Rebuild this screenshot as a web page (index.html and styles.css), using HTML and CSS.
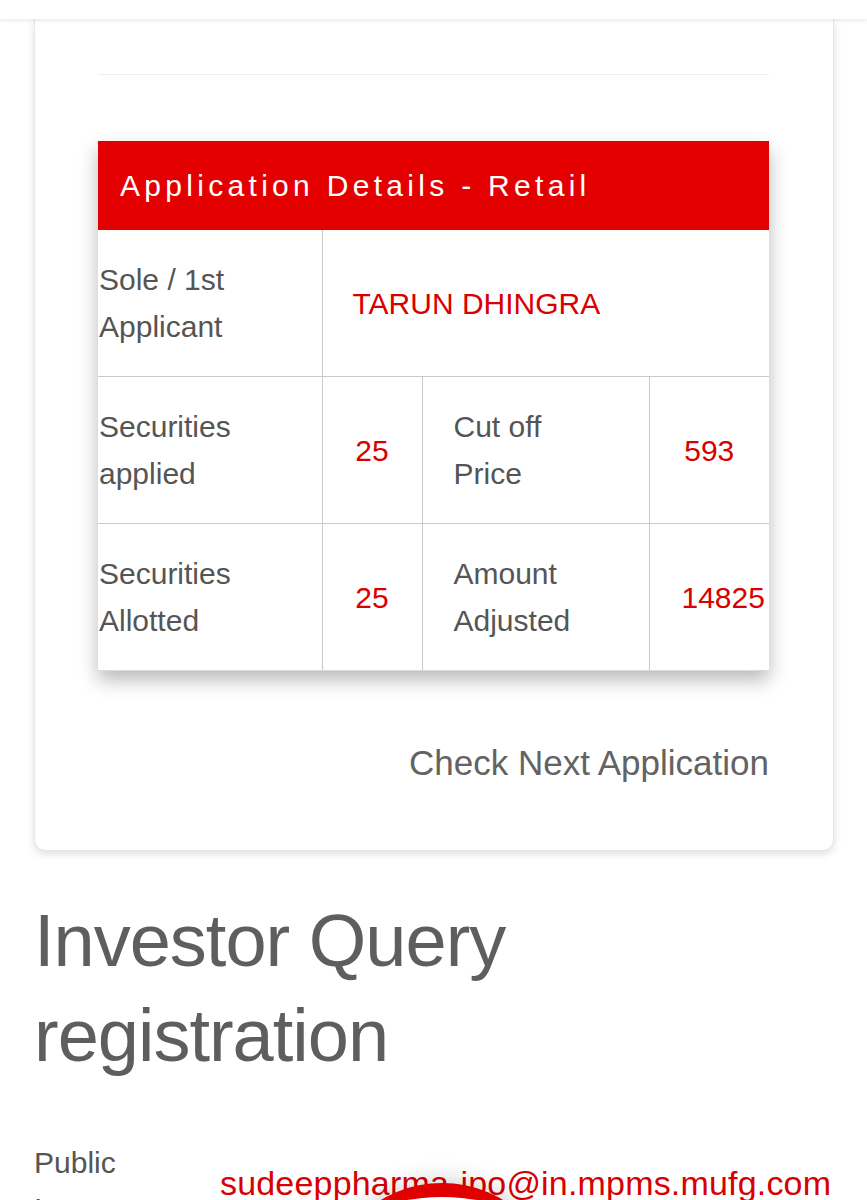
FILE: index.html
```html
<!DOCTYPE html>
<html lang="en">
<head>
<meta charset="utf-8">
<title>Allotment Status</title>
<link rel="stylesheet" href="styles.css">
</head>
<body>
<div class="topbar"></div>
<main class="page">
  <section class="card">
    <hr class="sep">
    <table class="details">
      <colgroup>
        <col class="c1"><col class="c2"><col class="c3"><col class="c4">
      </colgroup>
      <thead>
        <tr><th colspan="4">Application Details - Retail</th></tr>
      </thead>
      <tbody>
        <tr>
          <td class="label">Sole / 1st<br>Applicant</td>
          <td class="value name" colspan="3">TARUN DHINGRA</td>
        </tr>
        <tr>
          <td class="label">Securities<br>applied</td>
          <td class="value">25</td>
          <td class="label inner">Cut off<br>Price</td>
          <td class="value">593</td>
        </tr>
        <tr>
          <td class="label">Securities<br>Allotted</td>
          <td class="value">25</td>
          <td class="label inner">Amount<br>Adjusted</td>
          <td class="value">14825</td>
        </tr>
      </tbody>
    </table>
    <p class="next">Check Next Application</p>
  </section>

  <h1 class="title">Investor Query<br>registration</h1>

  <div class="contact">
    <div class="contact-label">Public Issue Email</div>
    <div class="contact-value">sudeeppharma-ipo@in.mpms.mufg.com</div>
  </div>
</main>
<div class="spinner"><div class="spinner-hole"></div></div>
</body>
</html>
```

FILE: styles.css
```css
html, body {
  margin: 0;
  padding: 0;
  background: #ffffff;
}

body {
  font-family: "Liberation Sans", Arial, sans-serif;
  color: #555555;
  position: relative;
  min-height: 1200px;
  overflow: hidden;
}

.topbar {
  position: relative;
  z-index: 2;
  height: 19px;
  background: #ffffff;
  box-shadow: 0 2px 3px rgba(0, 0, 0, 0.08);
}

.page {
  padding: 0 33px 0 34px;
}

.card {
  width: 800px;
  box-sizing: border-box;
  border: 1px solid #e6e6e6;
  border-top: none;
  border-radius: 0 0 11px 11px;
  box-shadow: 0 3px 8px rgba(0, 0, 0, 0.13);
  padding: 55px 64px 67px 63px;
  background: #ffffff;
}

.sep {
  margin: 0;
  border: none;
  border-top: 1px solid #efefef;
  height: 0;
}

.details {
  margin-top: 66px;
  width: 671px;
  table-layout: fixed;
  border-collapse: collapse;
  background: #ffffff;
  box-shadow: 0 9px 18px rgba(0, 0, 0, 0.28);
}

.c1 { width: 224px; }
.c2 { width: 100px; }
.c3 { width: 227px; }
.c4 { width: 120px; }

.details th {
  background: #e40000;
  color: #ffffff;
  font-weight: normal;
  font-size: 30px;
  letter-spacing: 4.3px;
  text-align: left;
  height: 89px;
  padding: 0 0 0 22px;
  line-height: 89px;
}

.details td {
  font-size: 30px;
  line-height: 47px;
  padding: 26px 0;
  vertical-align: middle;
  border-top: 1px solid #c9c9c9;
  border-left: 1px solid #c9c9c9;
}

.details tbody tr:first-child td {
  border-top: none;
}

.details tbody tr:last-child td {
  border-bottom: 1px solid #dcdcdc;
}

.details td.label {
  color: #555555;
  padding-left: 1px;
  border-left: none;
}

.details td.label.inner {
  padding-left: 31px;
  border-left: 1px solid #c9c9c9;
}

.details td.value {
  color: #d80000;
  text-align: center;
  padding-left: 32px;
  padding-right: 32px;
}

.details td.value.name {
  text-align: left;
  padding-left: 30px;
}

.next {
  margin: 72px 0 0 0;
  text-align: right;
  font-size: 35px;
  line-height: 40px;
  color: #636363;
}

.title {
  margin: 42px 0 0 0;
  font-weight: normal;
  font-size: 74px;
  line-height: 95px;
  letter-spacing: -1px;
  color: #5e5e5e;
}

.contact {
  margin-top: 57px;
  display: grid;
  grid-template-columns: 150px 1fr;
  column-gap: 36px;
  align-items: start;
}

.contact-label {
  font-size: 30px;
  line-height: 46px;
  color: #555555;
}

.contact-value {
  padding-top: 20px;
  font-size: 34px;
  line-height: 46px;
  letter-spacing: 0.18px;
  color: #d80000;
  white-space: nowrap;
}

.spinner {
  position: absolute;
  top: 1183px;
  left: 322px;
  width: 240px;
  height: 240px;
  border-radius: 50%;
  overflow: hidden;
  background: #e00000;
  box-shadow: 0 0 26px rgba(0, 0, 0, 0.22);
  z-index: 3;
}

.spinner-hole {
  position: absolute;
  top: 14px;
  left: -80px;
  width: 400px;
  height: 400px;
  border-radius: 50%;
  background: #ffffff;
}
```
